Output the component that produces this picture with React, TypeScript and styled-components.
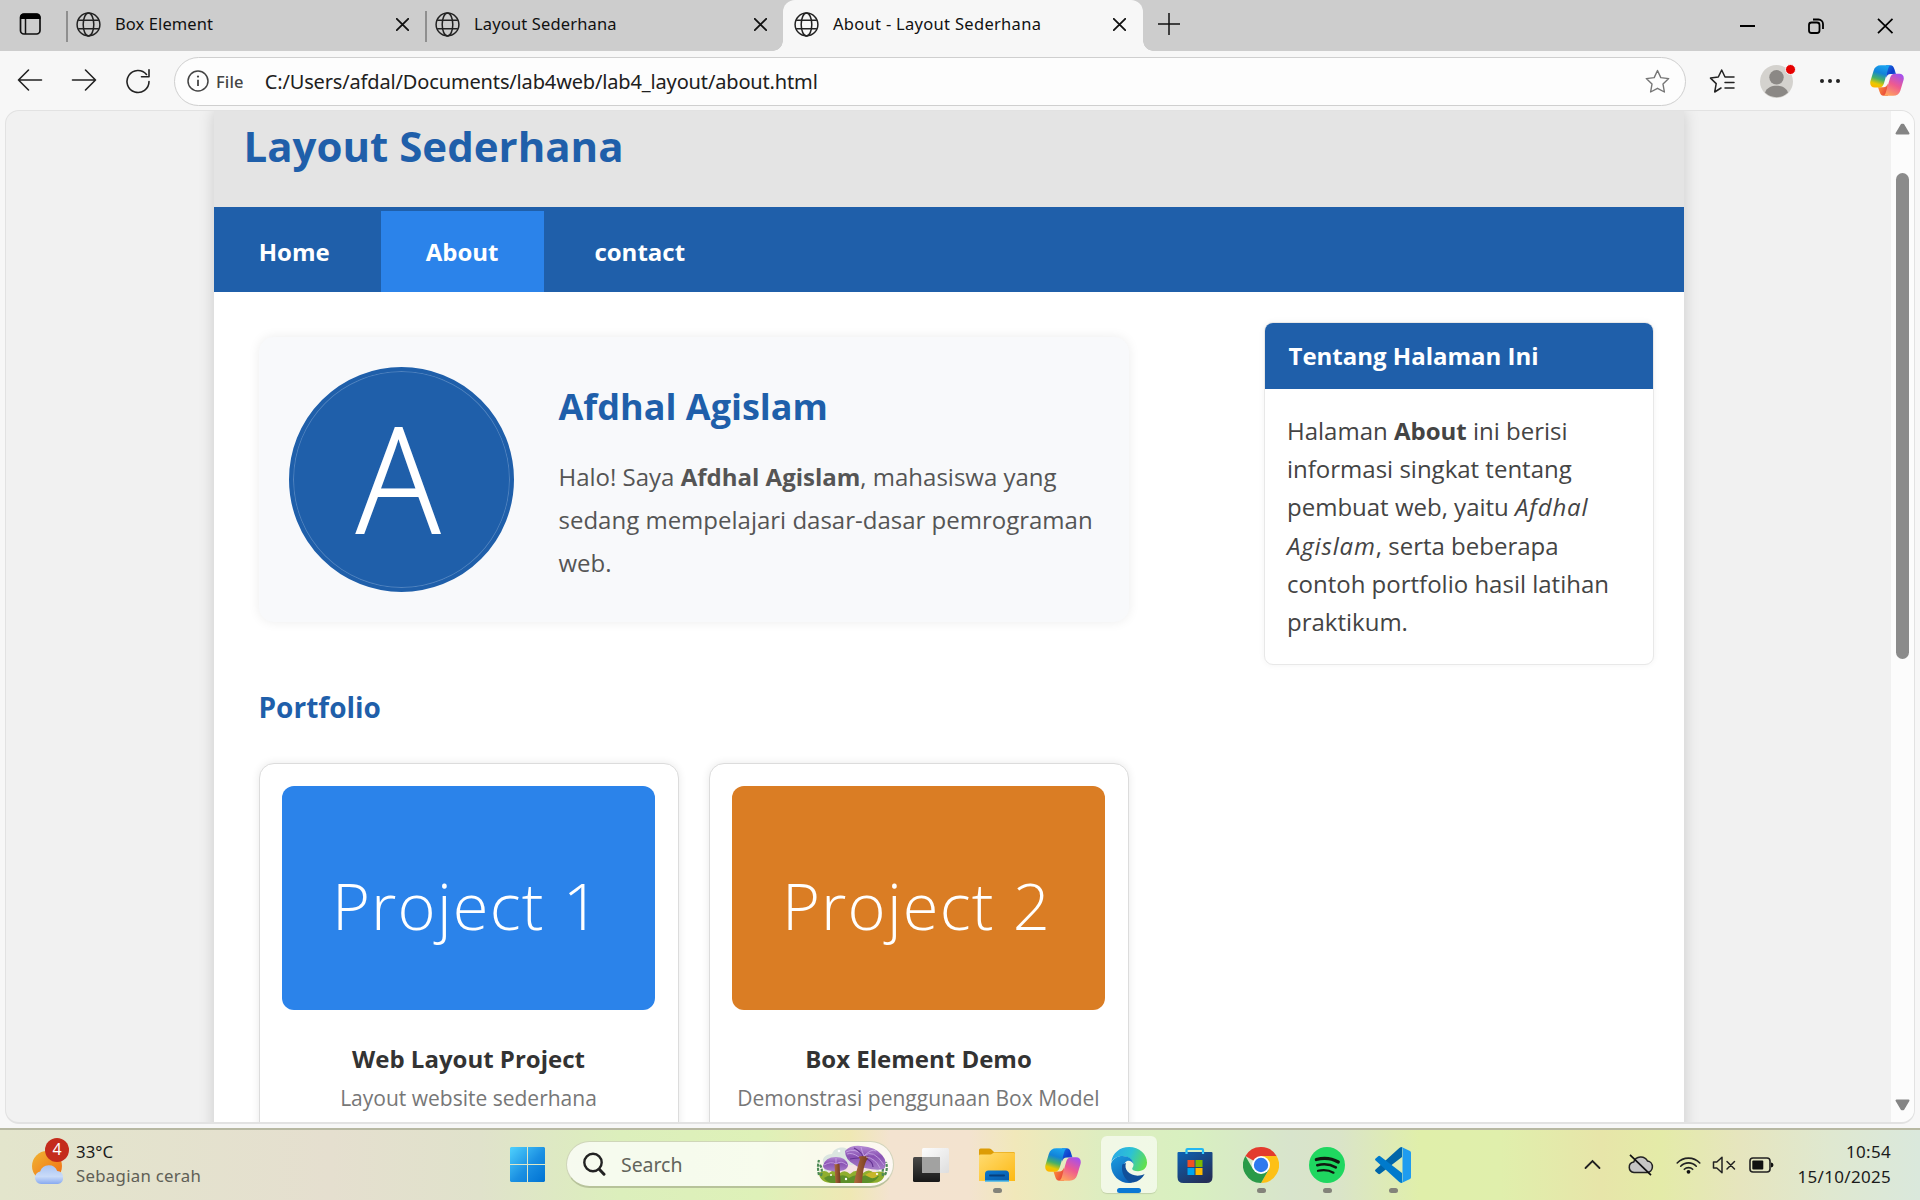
import React from "react";
import styled, { createGlobalStyle } from "styled-components";

const GlobalStyle = createGlobalStyle`
  *, *::before, *::after { box-sizing: border-box; }
  body { margin: 0; background: #f7f7f7; }
  svg { display: block; flex: none; }
`;

const ui = `"Noto Sans", "Open Sans", sans-serif`;
const pageFont = `"Open Sans", "Noto Sans", sans-serif`;

const Window = styled.div`
  width: 1920px;
  height: 1200px;
  display: flex;
  flex-direction: column;
  overflow: hidden;
  background: #f7f7f7;
  font-family: ${ui};
`;

/* ---------- tab strip ---------- */

const TabStrip = styled.header`
  height: 51px;
  flex: none;
  display: flex;
  background: #cdcdcd;
`;

const TabMenu = styled.div`
  width: 66px;
  height: 51px;
  padding: 0 0 3px 19px;
  display: flex;
  align-items: center;
`;

const Tab = styled.div<{ $active?: boolean; $width: number }>`
  position: relative;
  width: ${(p) => p.$width}px;
  height: 51px;
  padding: 0 ${(p) => (p.$active ? 17 : 16)}px 3px ${(p) => (p.$active ? 11 : 8)}px;
  display: flex;
  align-items: center;
  background: ${(p) => (p.$active ? "#f7f7f7" : "transparent")};
  border-radius: 12px 12px 0 0;
  ${(p) =>
    p.$active &&
    `
    &::before, &::after {
      content: "";
      position: absolute;
      bottom: 0;
      width: 10px;
      height: 10px;
    }
    &::before { left: -10px; background: radial-gradient(circle at 0 0, transparent 9.5px, #f7f7f7 10px); }
    &::after { right: -10px; background: radial-gradient(circle at 100% 0, transparent 9.5px, #f7f7f7 10px); }
  `}
`;

const TabDivider = styled.i`
  width: 2px;
  height: 31px;
  margin-top: 11px;
  background: #8f8f8f;
`;

const TabTitle = styled.span<{ $spacing: number }>`
  flex: 1;
  margin-left: 14px;
  font-size: 16.5px;
  line-height: 24px;
  letter-spacing: ${(p) => p.$spacing}px;
  color: #111;
  white-space: nowrap;
`;

const NewTab = styled.div`
  width: 52px;
  padding: 0 0 4px 15px;
  display: flex;
  align-items: center;
`;

const WindowControls = styled.div`
  margin-left: auto;
  display: flex;
  align-items: center;
  gap: 45px;
  padding: 0 23px 0 0;
`;

/* ---------- toolbar ---------- */

const Toolbar = styled.div`
  height: 60px;
  flex: none;
  display: flex;
  align-items: center;
  padding: 0 15px 0 17px;
`;

const NavButtons = styled.div`
  display: flex;
  gap: 28px;
  width: 157px;
`;

const AddressBar = styled.div`
  width: 1512px;
  height: 49px;
  display: flex;
  align-items: center;
  padding: 0 15px 0 12px;
  border: 1.5px solid #cfcfcf;
  border-radius: 25px;
  background: #fdfdfd;
`;

const Scheme = styled.span`
  margin-left: 7px;
  font-size: 16.5px;
  font-weight: 500;
  letter-spacing: 0.15px;
  color: #444;
`;

const Url = styled.span`
  flex: 1;
  margin-left: 21px;
  font-size: 20px;
  letter-spacing: -0.15px;
  color: #202020;
`;

const ToolbarActions = styled.div`
  flex: none;
  display: grid;
  grid-template-columns: 26px 32px 22px 34px;
  column-gap: 26px;
  align-items: center;
  padding-left: 23px;

  & > :last-child {
    margin-left: 3px;
  }
`;

const Profile = styled.div`
  position: relative;
  width: 33px;
  height: 33px;
  margin-left: -1px;
`;

const ProfileDot = styled.i`
  position: absolute;
  top: -1px;
  right: -3px;
  width: 11px;
  height: 11px;
  border: 1px solid #f7f7f7;
  border-radius: 50%;
  background: #e60000;
`;

/* ---------- viewport ---------- */

const Viewport = styled.div`
  height: 1014px;
  flex: none;
  margin: -1px 5px 0;
  display: flex;
  overflow: hidden;
  border: 1px solid #e2e2e2;
  border-bottom-width: 2px;
  border-radius: 14px;
  background: #f1f1f1;
`;

const PageArea = styled.div`
  flex: 1;
  display: flex;
  padding-left: 208px;
  overflow: hidden;
`;

const Container = styled.div`
  width: 1470px;
  height: 1100px;
  background: #fff;
  box-shadow: 0 0 15px rgba(0, 0, 0, 0.16);
  font-family: ${pageFont};
`;

const Header = styled.div`
  height: 96px;
  padding: 5px 30px 0 29.5px;
  background: #e4e4e4;
`;

const SiteTitle = styled.h1`
  margin: 0;
  font-size: 42px;
  line-height: 60px;
  font-weight: 700;
  color: #1f5faa;
`;

const Nav = styled.nav`
  height: 85px;
  padding-top: 4px;
  display: flex;
  gap: 6px;
  background: #1f5faa;
`;

const NavLink = styled.a<{ $active?: boolean }>`
  height: 81px;
  padding: 0 45.3px 0 44.7px;
  line-height: 82px;
  font-size: 24px;
  font-weight: 700;
  color: #fff;
  background: ${(p) => (p.$active ? "#2b83ea" : "transparent")};
`;

const Columns = styled.div`
  display: flex;
  align-items: flex-start;
  justify-content: space-between;
  padding: 30px 30px 0 45px;
`;

const Main = styled.main`
  width: 870px;
  padding-top: 15px;
`;

const Hero = styled.section`
  height: 285px;
  display: flex;
  align-items: center;
  gap: 44.5px;
  padding: 30px;
  border-radius: 15px;
  background: #f8f9fb;
  box-shadow: 0 0 12px rgba(0, 0, 0, 0.08);
`;

const Avatar = styled.div`
  width: 225px;
  height: 225px;
  flex: none;
  display: flex;
  justify-content: center;
  border: 4px solid #1f5faa;
  border-radius: 50%;
  background: #1f5faa;
  box-shadow: inset 0 0 0 1px rgba(120, 160, 208, 0.55);
`;

const AvatarLetter = styled.span`
  padding-right: 8px;
  font-size: 146px;
  line-height: 211px;
  font-weight: 300;
  color: #fff;
  -webkit-text-stroke: 1.8px #fff;
  transform: scaleX(0.95);
`;

const HeroText = styled.div`
  flex: 1;
  padding-top: 7px;
`;

const HeroName = styled.h2`
  margin: 0 0 24px;
  font-size: 36px;
  line-height: 49px;
  font-weight: 700;
  color: #1f5faa;
`;

const HeroBio = styled.p`
  margin: 0;
  font-size: 24px;
  line-height: 43.2px;
  color: #555;
`;

const SectionTitle = styled.h3`
  margin: 65px 0 36px -0.5px;
  font-size: 28px;
  line-height: 40px;
  font-weight: 700;
  color: #1f5faa;
`;

const Cards = styled.div`
  display: grid;
  grid-template-columns: 1fr 1fr;
  gap: 30px;
`;

const Card = styled.article`
  height: 400px;
  padding: 22px 23px 22px 22px;
  border: 1px solid #dcdcdc;
  border-radius: 15px;
  background: #fff;
  box-shadow: 0 0 9px rgba(0, 0, 0, 0.09);
  text-align: center;
`;

const CardImage = styled.div<{ $color: string }>`
  height: 224px;
  padding: 10px 4px 0 0;
  border-radius: 12px;
  background: ${(p) => p.$color};
  font-size: 65px;
  line-height: 218px;
  font-weight: 300;
  letter-spacing: 1.2px;
  color: #fff;
  white-space: nowrap;
`;

const CardTitle = styled.h4`
  margin: 32px 0 0;
  font-size: 24px;
  line-height: 34px;
  font-weight: 700;
  color: #333;
`;

const CardText = styled.p`
  margin: 4px -10px 0;
  font-size: 21px;
  line-height: 36px;
  color: #777;
  white-space: nowrap;
`;

const Widget = styled.aside`
  width: 390px;
  height: 343px;
  overflow: hidden;
  border: 1px solid #e8e8e8;
  border-radius: 9px;
  background: #fff;
  box-shadow: 0 0 6px rgba(0, 0, 0, 0.05);
`;

const WidgetTitle = styled.h3`
  height: 66px;
  margin: 0;
  padding: 0 23.5px;
  font-size: 24px;
  line-height: 66px;
  font-weight: 700;
  color: #fff;
  background: #1f5faa;
`;

const WidgetText = styled.p`
  margin: 0;
  padding: 23px 22px 0;
  font-size: 24px;
  line-height: 38.2px;
  color: #444;

  i {
    letter-spacing: 0.85px;
  }
`;

const Scrollbar = styled.div`
  width: 23px;
  padding: 12px 0 11px;
  display: flex;
  flex-direction: column;
  align-items: center;
  background: #fcfcfc;
`;

const ScrollThumb = styled.div`
  width: 13px;
  height: 486px;
  margin: 38px 0 auto;
  border-radius: 7px;
  background: #8b8b8b;
`;

/* ---------- taskbar ---------- */

const Taskbar = styled.footer`
  height: 72px;
  flex: none;
  margin-top: auto;
  display: grid;
  grid-template-columns: 499px auto 1fr;
  border-top: 2px solid #b7b8a2;
  background: linear-gradient(
    90deg,
    #e3e5cc 0, #e5dfcf 330px, #e0e2cb 480px, #dcefbc 620px, #def1b8 760px,
    #efe8b4 850px, #f3e3d0 890px, #f3e3cf 970px, #f1e8ba 1015px, #deedc0 1100px,
    #d8f0c0 1190px, #d8e4cc 1290px, #dae4c8 1340px, #e0efaa 1420px, #e0efac 1500px,
    #e7e5a9 1600px, #e4eba8 1660px, #e6e5be 1740px, #dfe8d0 1830px, #dae8dc 1920px
  );
`;

const Weather = styled.div`
  display: flex;
  align-items: center;
  padding: 0 0 2px 31px;
  gap: 10px;
`;

const WeatherIcon = styled.div`
  position: relative;
  width: 35px;
  height: 44px;
  padding-top: 9px;
`;

const WeatherBadge = styled.span`
  position: absolute;
  top: -4px;
  left: 14px;
  width: 24px;
  height: 24px;
  border-radius: 50%;
  background: #c42b1c;
  color: #fff;
  font-size: 16px;
  line-height: 23px;
  text-align: center;
`;

const WeatherText = styled.div`
  display: flex;
  flex-direction: column;
  font-size: 16.8px;
  line-height: 24.5px;
  letter-spacing: 0.05px;
  color: #1b1b1b;
`;

const Muted = styled.span`
  color: #5f5f56;
  letter-spacing: 0.28px;
`;

const Apps = styled.div`
  display: flex;
  align-items: center;
  gap: 10px;
  padding-bottom: 1px;
`;

const AppButton = styled.div<{ $active?: boolean }>`
  position: relative;
  width: 56px;
  height: 57px;
  display: flex;
  align-items: center;
  justify-content: center;
  border-radius: 6px;
  background: ${(p) => (p.$active ? "rgba(255,255,255,.6)" : "transparent")};
  box-shadow: ${(p) => (p.$active ? "0 1px 1px rgba(0,0,0,.12)" : "none")};
`;

const Indicator = styled.i<{ $active?: boolean }>`
  position: absolute;
  bottom: 0;
  width: ${(p) => (p.$active ? 24 : 9)}px;
  height: 5px;
  border-radius: 3px;
  background: ${(p) => (p.$active ? "#0a78d4" : "#83837a")};
`;

const SearchBox = styled.div`
  width: 328px;
  height: 47px;
  margin: 0 -1px 0 1px;
  display: flex;
  align-items: center;
  padding: 0 4px 0 16px;
  border: 1px solid rgba(160, 170, 120, 0.45);
  border-bottom: 2px solid rgba(150, 165, 110, 0.65);
  border-radius: 24px;
  background: rgba(255, 255, 255, 0.74);
`;

const SearchText = styled.span`
  flex: 1;
  margin-left: 15px;
  font-size: 19.5px;
  letter-spacing: -0.05px;
  color: #62645b;
`;

const Tray = styled.div`
  display: flex;
  align-items: center;
  justify-content: flex-end;
  padding: 0 29px 1px 0;
`;

const TrayItem = styled.div<{ $gap: number }>`
  margin-right: ${(p) => p.$gap}px;
`;

const Clock = styled.div`
  width: 94px;
  display: flex;
  flex-direction: column;
  align-items: flex-end;
  font-size: 17px;
  line-height: 24.5px;
  letter-spacing: 0.3px;
  white-space: nowrap;
  color: #1b1b1b;
`;

/* ---------- icons ---------- */

const Globe = () => (
  <svg width="25" height="25" viewBox="0 0 25 25" fill="none" stroke="#222" strokeWidth="1.5">
    <circle cx="12.5" cy="12.5" r="11.4" />
    <ellipse cx="12.5" cy="12.5" rx="5.3" ry="11.4" />
    <path d="M2.2 8.3h20.6M2.2 16.7h20.6" />
  </svg>
);

const Cross = ({ size = 13, w = 1.8 }: { size?: number; w?: number }) => (
  <svg width={size} height={size} viewBox="0 0 13 13" stroke="#111" strokeWidth={w} strokeLinecap="round">
    <path d="M.8.8 12.2 12.2M12.2.8.8 12.2" />
  </svg>
);

const TabMenuIcon = () => (
  <svg width="23" height="22" viewBox="0 0 23 22" fill="none">
    <rect x="1.500" y="1" width="19.500" height="20" rx="3.500" stroke="#111" strokeWidth="1.700" />
    <path d="M1 6V4.500A4 4 0 0 1 5 .5h12.500a4 4 0 0 1 4 4V6z" fill="#000" />
    <path d="M6.500 6v15" stroke="#111" strokeWidth="1.500" />
  </svg>
);

const Arrow = ({ flip }: { flip?: boolean }) => (
  <svg width="26" height="24" viewBox="0 0 26 24" fill="none" stroke="#222" strokeWidth="1.6" strokeLinecap="round" strokeLinejoin="round">
    <path d={flip ? "M1.500 12h23M14.500 2l10 10-10 10" : "M24.500 12h-23M11.500 2l-10 10 10 10"} />
  </svg>
);

const Reload = () => (
  <svg width="26" height="26" viewBox="0 0 26 26" fill="none" stroke="#222" strokeWidth="1.6" strokeLinecap="round" strokeLinejoin="round">
    <path d="M24 13.500A11 11 0 1 1 21.500 6.500M24 1.800v7h-7.500" />
  </svg>
);

const Info = () => (
  <svg width="22" height="22" viewBox="0 0 22 22" fill="none" stroke="#444" strokeWidth="1.5">
    <circle cx="11" cy="11" r="10" />
    <path d="M11 9.700v6.300" strokeWidth="1.8" />
    <circle cx="11" cy="6.600" r="1.100" fill="#444" stroke="none" />
  </svg>
);

const Star = () => (
  <svg width="25" height="25" viewBox="0 0 25 25" fill="none" stroke="#757575" strokeWidth="1.4" strokeLinejoin="round">
    <path d="M12.500 1.500 15.800 8.600 23.700 9.600 18 15.100 19.400 23 12.500 19.300 5.600 23 7 15.100 1.300 9.600 9.200 8.600z" />
  </svg>
);

const Favorites = () => (
  <svg width="26" height="26" viewBox="0 0 26 26" fill="none" stroke="#222" strokeWidth="1.5" strokeLinejoin="round" strokeLinecap="round">
    <path d="M25 9H16l-3.300-7-3.400 7-7.800 1.100 5.700 5.500L5.700 24l6.300-4" />
    <path d="M16 14.500h9M16 20h9" />
  </svg>
);

const ProfileIcon = () => (
  <svg width="33" height="33" viewBox="0 0 33 33">
    <circle cx="16.500" cy="16.500" r="16.500" fill="#d4d2ce" />
    <circle cx="16.500" cy="12.300" r="7.200" fill="#8b8885" />
    <path d="M5 27.500c2-5 6.500-6.700 11.500-6.700S26 22.500 28 27.500a16.500 16.500 0 0 1-23 0z" fill="#8b8885" />
  </svg>
);

const Copilot = ({ id, size = 36 }: { id: string; size?: number }) => (
  <svg width={size} height={(size * 33) / 36} viewBox="0 0 36 33">
    <defs>
      <linearGradient id={`${id}a`} x1=".6" y1="0" x2=".3" y2="1">
        <stop offset="0" stopColor="#1aa3f0" />
        <stop offset=".35" stopColor="#1283d8" />
        <stop offset=".62" stopColor="#45b06a" />
        <stop offset=".85" stopColor="#e9c800" />
        <stop offset="1" stopColor="#ffb700" />
      </linearGradient>
      <linearGradient id={`${id}b`} x1=".8" y1="0" x2=".3" y2="1">
        <stop offset="0" stopColor="#a350f0" />
        <stop offset=".5" stopColor="#ee5a90" />
        <stop offset="1" stopColor="#ffa45c" />
      </linearGradient>
      <linearGradient id={`${id}c`} x1="0" y1="0" x2="1" y2="1">
        <stop offset="0" stopColor="#1b6fe0" />
        <stop offset=".6" stopColor="#0e3ccc" />
        <stop offset="1" stopColor="#2a78e4" />
      </linearGradient>
      <linearGradient id={`${id}d`} x1="0" y1="0" x2="1" y2=".6">
        <stop offset="0" stopColor="#ff9a3c" />
        <stop offset="1" stopColor="#e8443a" />
      </linearGradient>
    </defs>
    <path d="M17 .3h4.500c2.500 0 3.500 1.500 4.300 4L27.500 9.500H22c-3 0-4 1.500-4.800 4z" fill={`url(#${id}c)`} />
    <path d="M19 32.700h-4.500c-2.500 0-3.500-1.500-4.300-4L8.500 23.500H14c3 0 4-1.500 4.800-4z" fill={`url(#${id}d)`} />
    <path d="M11.500.3H23c-2 0-3 1.200-3.700 3.500l-4.500 15.500c-.9 2.900-2.300 4.500-5.300 4.500H5c-3.600 0-5.400-2.500-4.600-6.500L3.800 6C4.900 2.300 7.500.3 11.500.3z" fill={`url(#${id}a)`} />
    <path d="M24.500 32.700H13c2 0 3-1.200 3.700-3.500l4.500-15.500c.9-2.900 2.300-4.500 5.300-4.500H31c3.600 0 5.400 2.500 4.600 6.500L32.200 27c-1.100 3.700-3.700 5.700-7.700 5.700z" fill={`url(#${id}b)`} />
  </svg>
);

const Triangle = ({ down }: { down?: boolean }) => (
  <svg width="15" height="12" viewBox="0 0 15 12" fill="#858585" stroke="#858585" strokeWidth="2" strokeLinejoin="round">
    <path d={down ? "M1.500 1.500h12l-5.200 8.700h-1.600z" : "M1.500 10.500h12L8.300 1.800H6.700z"} />
  </svg>
);

const Cloudy = () => (
  <svg width="34" height="34" viewBox="0 0 34 34">
    <defs>
      <linearGradient id="sun" x1="0" y1="0" x2="1" y2="1">
        <stop offset="0" stopColor="#f0b533" />
        <stop offset="1" stopColor="#f26a12" />
      </linearGradient>
      <linearGradient id="cloud" x1="0" y1="0" x2="0" y2="1">
        <stop offset="0" stopColor="#a9c4f4" />
        <stop offset=".6" stopColor="#c9dbf8" />
        <stop offset="1" stopColor="#88aaf0" />
      </linearGradient>
    </defs>
    <circle cx="16" cy="15" r="15" fill="url(#sun)" />
    <path d="M10 33a6.300 6.300 0 0 1-.8-12.500 9 9 0 0 1 17-.5A6.600 6.600 0 0 1 27 33z" fill="url(#cloud)" />
  </svg>
);

const WindowsLogo = () => (
  <svg width="35" height="35" viewBox="0 0 35 35">
    <defs>
      <linearGradient id="win" gradientUnits="userSpaceOnUse" x1="0" y1="0" x2="35" y2="35">
        <stop offset="0" stopColor="#4fd1fd" />
        <stop offset=".55" stopColor="#1a8fe2" />
        <stop offset="1" stopColor="#0072d2" />
      </linearGradient>
    </defs>
    <path fill="url(#win)" d="M1 0h16v17H0V1zM18 0h16l1 1v16H18zM0 18h17v17H1l-1-1zM18 18h17v16l-1 1H18z" />
  </svg>
);

const SearchIcon = () => (
  <svg width="23" height="24" viewBox="0 0 23 24" fill="none" stroke="#222" strokeLinecap="round">
    <circle cx="10" cy="10.500" r="8.700" strokeWidth="2.400" />
    <path d="M16.500 17.500l4.500 4.700" strokeWidth="3" />
  </svg>
);

const Mushrooms = () => (
  <svg width="73" height="38" viewBox="0 0 73 38">
    <defs>
      <linearGradient id="cap" x1="0" y1="0" x2="0" y2="1">
        <stop offset="0" stopColor="#b48ad4" />
        <stop offset=".45" stopColor="#8a52b4" />
        <stop offset="1" stopColor="#a77fc9" />
      </linearGradient>
      <linearGradient id="stem" x1="0" y1="0" x2="1" y2="0">
        <stop offset="0" stopColor="#b06a3c" />
        <stop offset="1" stopColor="#703a20" />
      </linearGradient>
    </defs>
    <path d="M7 17c-1-5 4-8 9-8 2-6 10-8 15-5l10 8 22 8v10H9z" fill="#dbe6e0" />
    <path d="M12 20h48v10H12z" fill="#f6e2e4" />
    <path d="M3 28q5-4 10 0 5-5 11 0 5-4 10 1 6-6 13-1 6-5 11 0 6-3 11 0-1 10-13 10H16C8 38 3 34 3 28z" fill="#8fae2e" />
    <path d="M8 33q7-5 13-1 7-4 12 1 7-5 12-1 7-4 18-1-4 7-12 7H18q-7 0-10-5z" fill="#5d8f2a" />
    <path d="M49 30q6-5 14-2-2 6-8 5z" fill="#c8b62c" />
    <path d="M3 30Q1 22 3 15M5 31Q7 24 4 20M69 30Q72 24 70 17M67 31Q66 25 68 21" stroke="#4d8a55" strokeWidth="2.200" fill="none" strokeDasharray="3 1.200" />
    <path d="M7 21Q9 12 20 12q10 0 12 8 0 5-8 6-5 1-8 0Q7 25 7 21z" fill="url(#cap)" />
    <path d="M29 6Q34 0 45 1q15 1 21 9 6 7 2 14-7 2-19-1-7 0-10-3Q29 15 29 6z" fill="url(#cap)" />
    <path d="M18.500 19h5l1 19h-5z" fill="url(#stem)" />
    <path d="M42 12q5-2 11 0-6 6-7 26h-8q3-15 6-24z" fill="url(#stem)" />
    <path d="M30 7q9-5 18 4 9-8 20 9M45 2q1 5 3 9 8-8 12-5M50 12q9 1 14 11M43 12q-7-5-12-3M8 20q7-4 12-1 5-4 11 1M20 13v6" stroke="#c9a9e4" strokeWidth=".8" fill="none" />
    <path d="M34 14q6-1 9-1M51 14q6 3 6 8M38 3q6 3 9 8" stroke="#643392" strokeWidth="1.200" fill="none" />
    <g fill="#fff"><circle cx="23" cy="6" r="1.300" /><circle cx="30" cy="34" r="1.200" /><circle cx="15" cy="30" r="1" /><circle cx="61" cy="29" r="1.100" /></g>
  </svg>
);

const TaskView = () => (
  <svg width="36" height="34" viewBox="0 0 36 34">
    <defs>
      <linearGradient id="tv" x1="0" y1="0" x2="0" y2="1"><stop offset="0" stopColor="#4a4a48" /><stop offset="1" stopColor="#181818" /></linearGradient>
      <linearGradient id="tw" x1="0" y1="0" x2="1" y2="1"><stop offset="0" stopColor="#fdfdfd" /><stop offset="1" stopColor="#dedede" /></linearGradient>
    </defs>
    <rect x="0" y="9" width="27" height="25" rx="1.500" fill="url(#tv)" />
    <rect x="9" y="0" width="27" height="25" rx="1.500" fill="url(#tw)" />
    <path d="M9 9h18v16H10.500L9 23.500z" fill="#a2a2a1" />
  </svg>
);

const Explorer = () => (
  <svg width="36" height="34" viewBox="0 0 36 34">
    <defs>
      <linearGradient id="fold" x1="0" y1="0" x2="1" y2="1"><stop offset="0" stopColor="#ffdc73" /><stop offset="1" stopColor="#fdb913" /></linearGradient>
      <linearGradient id="folb" x1="0" y1="0" x2="1" y2="1"><stop offset="0" stopColor="#0b78d0" /><stop offset="1" stopColor="#095aa8" /></linearGradient>
    </defs>
    <path d="M0 2q0-1.500 1.500-1.500H10q1.500 0 2.500 1L15 4h19.500Q36 4 36 5.500V12H0z" fill="#dd9c05" />
    <path d="M0 7.500Q0 6.500 1.500 6.500H12L15 4.500H34.500Q36 4.500 36 6V33H0z" fill="url(#fold)" />
    <path d="M6 33v-7q0-3.500 3.500-3.500h17Q30 22.500 30 26v7z" fill="url(#folb)" />
    <path d="M6 33h24" stroke="#45b4e8" strokeWidth="1.500" />
    <path d="M11 27.500h14" stroke="#063f7c" strokeWidth="2" strokeLinecap="round" />
  </svg>
);

const Edge = () => (
  <svg width="36" height="36" viewBox="0 0 36 36">
    <defs>
      <linearGradient id="ed1" x1="0" y1=".3" x2="1" y2=".6"><stop offset="0" stopColor="#2aa9e6" /><stop offset=".5" stopColor="#2cc2d4" /><stop offset="1" stopColor="#62e04c" /></linearGradient>
      <linearGradient id="ed2" x1="0" y1="0" x2=".6" y2="1"><stop offset="0" stopColor="#1c9de0" /><stop offset="1" stopColor="#0c62b8" /></linearGradient>
    </defs>
    <path d="M.3 15C1.500 6 9 0 18 0c10.500 0 18 7.500 18 15.500 0 5.500-4 8.700-9 8.700-3.500 0-5.800-1.200-5.800-2.500 0-1 1.300-1.500 1.300-4C22.500 13 17 9 11.500 9 6.500 9 2.500 11.500.3 15z" fill="url(#ed1)" />
    <path d="M.1 16.500C2 11.500 6.500 9 11.500 9c6 0 10.700 3.500 11 8.200-.8-2.200-3-3.400-4.800-3.400-3.200 0-5.200 3.200-4.700 7.200.8 6 6 10.500 12 10l-4.600 4.800Q19 36 18 36C8 36-.7 27.500.1 16.500z" fill="url(#ed2)" />
    <path d="M11.300 17.500C9.500 26 15.500 36 22 35.600c5.500-1 9.500-4.500 11.600-8.600-5.600 2.800-13 2-17-2.500-2.200-2.400-2.600-5.500-1.600-8.500z" fill="#10509a" />
  </svg>
);

const Store = () => (
  <svg width="36" height="36" viewBox="0 0 36 36">
    <defs>
      <linearGradient id="st" x1="0" y1="0" x2=".7" y2="1"><stop offset="0" stopColor="#0c62b4" /><stop offset="1" stopColor="#242f58" /></linearGradient>
    </defs>
    <path d="M9.500 7V3Q9.500 2 10.500 2h14.500q1 0 1 1v4" fill="none" stroke="#22b6f2" strokeWidth="2.200" />
    <path d="M.5 6q0-1 1-1h33q1 0 1 1v24q0 6-6 6h-23q-6 0-6-6z" fill="url(#st)" />
    <path d="M9.500 5v2M26 5v2" stroke="#39d0ff" strokeWidth="2.200" />
    <path d="M10.500 13h7v7h-7z" fill="#f25022" /><path d="M18.500 13h7v7h-7z" fill="#7fba00" />
    <path d="M10.500 21h7v7h-7z" fill="#00a4ef" /><path d="M18.500 21h7v7h-7z" fill="#ffb900" />
  </svg>
);

const Chrome = () => (
  <svg width="36" height="36" viewBox="0 0 36 36">
    <path d="M18 18 2.410 9A18 18 0 0 1 33.590 9z" fill="#e33b2e" />
    <path d="M33.590 9A18 18 0 0 1 18 36l7.800-13.500L18 9z" fill="#fdc016" />
    <path d="M2.410 9A18 18 0 0 0 18 36l7.800-13.500-15.600 0z" fill="#2a9a48" />
    <circle cx="18" cy="18" r="9" fill="#fff" />
    <circle cx="18" cy="18" r="7.200" fill="#2f79ee" />
  </svg>
);

const Spotify = () => (
  <svg width="36" height="36" viewBox="0 0 36 36" fill="none" stroke="#10170f" strokeLinecap="round">
    <circle cx="18" cy="18" r="18" fill="#1fd760" stroke="none" />
    <path d="M7.300 12.500c7.500-2 15.500-1.200 22 2.500" strokeWidth="3.200" />
    <path d="M8.300 18.200c6.500-1.700 13-1 18.500 2.200" strokeWidth="2.700" />
    <path d="M9 23.800c5.500-1.300 11-.8 15.500 1.900" strokeWidth="2.200" />
  </svg>
);

const VsCode = () => (
  <svg width="36" height="36" viewBox="0 0 36 36">
    <path d="M27 0v10L5.200 26.800q-1 .7-2 0L.6 24.500q-1.100-1 0-2L24.300.9Q25.500 0 27 0z" fill="#0065a9" />
    <path d="M27 36V26L5.200 9.200q-1-.7-2 0L.6 11.500q-1.100 1 0 2l23.700 21.600Q25.500 36 27 36z" fill="#007acc" />
    <path d="M26.500.1 35 4q1 .5 1 1.700v24.600q0 1.200-1 1.700l-8.500 3.900Q27.500 35 27.500 33V3Q27.500 1 26.500.1z" fill="#1f9cf0" />
  </svg>
);

const ChevronUp = () => (
  <svg width="17" height="11" viewBox="0 0 17 11" fill="none" stroke="#222" strokeWidth="1.800" strokeLinecap="round"><path d="M1.500 9 8.500 2l7 7" /></svg>
);

const CloudOff = () => (
  <svg width="26" height="22" viewBox="0 0 26 22">
    <path d="M6 18.500a5.300 5.300 0 0 1-.3-10.500A7.500 7.500 0 0 1 19.500 7a5.800 5.800 0 0 1-.3 11.500z" fill="#c6c6c4" stroke="#222" strokeWidth="1.500" />
    <path d="M2 .8l21 20.400" stroke="#111" strokeWidth="1.700" />
  </svg>
);

const Wifi = () => (
  <svg width="25" height="18" viewBox="0 0 25 18" fill="none" stroke="#222" strokeWidth="1.600" strokeLinecap="round">
    <path d="M1.200 7a15.500 15.500 0 0 1 22.600 0M4.700 10.200a10.800 10.800 0 0 1 15.600 0M8.300 13.300a6 6 0 0 1 8.400 0" />
    <circle cx="12.500" cy="15.800" r="1.900" fill="#111" stroke="none" />
  </svg>
);

const Mute = () => (
  <svg width="24" height="18" viewBox="0 0 24 18" fill="none" stroke="#222" strokeWidth="1.500" strokeLinejoin="round" strokeLinecap="round">
    <path d="M1.500 6h3.300L10 1.300v15.400L4.800 12H1.500zM15 5.500l7.500 7.500M22.500 5.500 15 13" />
  </svg>
);

const Battery = () => (
  <svg width="25" height="16" viewBox="0 0 25 16">
    <rect x="1" y="1" width="20" height="14" rx="3" fill="none" stroke="#222" strokeWidth="1.600" />
    <rect x="3.300" y="3.500" width="11" height="9" rx="1" fill="#111" />
    <path d="M22 5.500q2.500.3 2.500 2.500T22 10.500z" fill="#111" />
  </svg>
);

/* ---------- app ---------- */

export default function App() {
  return (
    <Window>
      <GlobalStyle />
      <TabStrip>
        <TabMenu><TabMenuIcon /></TabMenu>
        <TabDivider />
        <Tab $width={357}><Globe /><TabTitle $spacing={0.1}>Box Element</TabTitle><Cross /></Tab>
        <TabDivider />
        <Tab $width={356}><Globe /><TabTitle $spacing={0.15}>Layout Sederhana</TabTitle><Cross /></Tab>
        <Tab $width={360} $active><Globe /><TabTitle $spacing={0.3}>About - Layout Sederhana</TabTitle><Cross /></Tab>
        <NewTab>
          <svg width="22" height="22" viewBox="0 0 22 22" stroke="#111" strokeWidth="1.500"><path d="M11 0v22M0 11h22" /></svg>
        </NewTab>
        <WindowControls>
          <svg width="24" height="16" viewBox="0 0 24 16" stroke="#000" strokeWidth="2"><path d="M5 8h15" /></svg>
          <svg width="24" height="16" viewBox="0 0 24 16" fill="none" stroke="#000" strokeWidth="1.800">
            <rect x="5" y="4.500" width="10.500" height="10.500" rx="2.500" />
            <path d="M9 1.500h5.500a4.500 4.500 0 0 1 4.500 4.500v5" />
          </svg>
          <svg width="24" height="16" viewBox="0 0 24 16" stroke="#000" strokeWidth="1.700"><path d="M5 .8 19.500 15.200M19.500.8 5 15.200" /></svg>
        </WindowControls>
      </TabStrip>

      <Toolbar>
        <NavButtons><Arrow /><Arrow flip /><Reload /></NavButtons>
        <AddressBar>
          <Info />
          <Scheme>File</Scheme>
          <Url>C:/Users/afdal/Documents/lab4web/lab4_layout/about.html</Url>
          <Star />
        </AddressBar>
        <ToolbarActions>
          <Favorites />
          <Profile><ProfileIcon /><ProfileDot /></Profile>
          <svg width="22" height="6" viewBox="0 0 22 6" fill="#222"><circle cx="3" cy="3" r="2" /><circle cx="11" cy="3" r="2" /><circle cx="19" cy="3" r="2" /></svg>
          <Copilot id="ct" size={34} />
        </ToolbarActions>
      </Toolbar>

      <Viewport>
        <PageArea>
          <Container>
            <Header><SiteTitle>Layout Sederhana</SiteTitle></Header>
            <Nav>
              <NavLink>Home</NavLink>
              <NavLink $active>About</NavLink>
              <NavLink>contact</NavLink>
            </Nav>
            <Columns>
              <Main>
                <Hero>
                  <Avatar><AvatarLetter>A</AvatarLetter></Avatar>
                  <HeroText>
                    <HeroName>Afdhal Agislam</HeroName>
                    <HeroBio>Halo! Saya <b>Afdhal Agislam</b>, mahasiswa yang sedang mempelajari dasar-dasar pemrograman web.</HeroBio>
                  </HeroText>
                </Hero>
                <SectionTitle>Portfolio</SectionTitle>
                <Cards>
                  <Card>
                    <CardImage $color="#2b83ea">Project 1</CardImage>
                    <CardTitle>Web Layout Project</CardTitle>
                    <CardText>Layout website sederhana</CardText>
                  </Card>
                  <Card>
                    <CardImage $color="#da7d24">Project 2</CardImage>
                    <CardTitle>Box Element Demo</CardTitle>
                    <CardText>Demonstrasi penggunaan Box Model</CardText>
                  </Card>
                </Cards>
              </Main>
              <Widget>
                <WidgetTitle>Tentang Halaman Ini</WidgetTitle>
                <WidgetText>
                  Halaman <b>About</b> ini berisi informasi singkat tentang pembuat web, yaitu <i>Afdhal Agislam</i>, serta beberapa contoh portfolio hasil latihan praktikum.
                </WidgetText>
              </Widget>
            </Columns>
          </Container>
        </PageArea>
        <Scrollbar><Triangle /><ScrollThumb /><Triangle down /></Scrollbar>
      </Viewport>

      <Taskbar>
        <Weather>
          <WeatherIcon><Cloudy /><WeatherBadge>4</WeatherBadge></WeatherIcon>
          <WeatherText><span>33°C</span><Muted>Sebagian cerah</Muted></WeatherText>
        </Weather>
        <Apps>
          <AppButton><WindowsLogo /></AppButton>
          <SearchBox><SearchIcon /><SearchText>Search</SearchText><Mushrooms /></SearchBox>
          <AppButton><TaskView /></AppButton>
          <AppButton><Explorer /><Indicator /></AppButton>
          <AppButton><Copilot id="cb" /></AppButton>
          <AppButton $active><Edge /><Indicator $active /></AppButton>
          <AppButton><Store /></AppButton>
          <AppButton><Chrome /><Indicator /></AppButton>
          <AppButton><Spotify /><Indicator /></AppButton>
          <AppButton><VsCode /><Indicator /></AppButton>
        </Apps>
        <Tray>
          <TrayItem $gap={27}><ChevronUp /></TrayItem>
          <TrayItem $gap={22}><CloudOff /></TrayItem>
          <TrayItem $gap={11}><Wifi /></TrayItem>
          <TrayItem $gap={13}><Mute /></TrayItem>
          <TrayItem $gap={23}><Battery /></TrayItem>
          <Clock><span>10:54</span><span>15/10/2025</span></Clock>
        </Tray>
      </Taskbar>
    </Window>
  );
}
